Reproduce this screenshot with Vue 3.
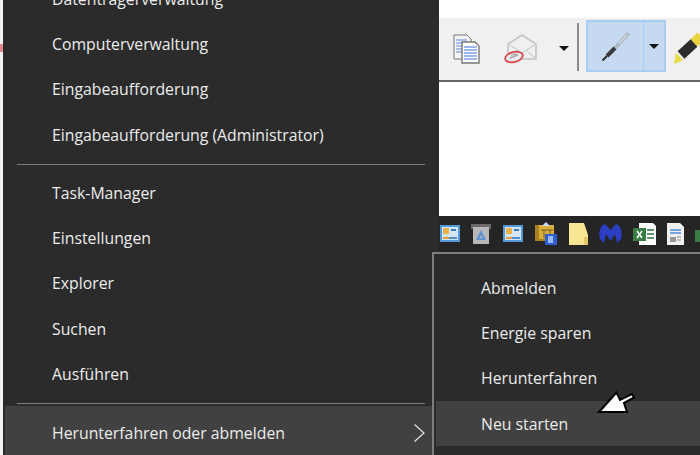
<script setup>
const groups = [
  ['Datenträgerverwaltung', 'Computerverwaltung', 'Eingabeaufforderung', 'Eingabeaufforderung (Administrator)'],
  ['Task-Manager', 'Einstellungen', 'Explorer', 'Suchen', 'Ausführen'],
]
const subItems = ['Abmelden', 'Energie sparen', 'Herunterfahren']
</script>

<template>
  <div class="screen">
    <div class="strip"><span class="mark"></span></div>
    <nav class="menu">
      <template v-for="(g, i) in groups" :key="i">
        <div class="row" v-for="t in g" :key="t">{{ t }}</div>
        <div class="sep" :class="'sep' + i"></div>
      </template>
      <div class="row hot">
        <span>Herunterfahren oder abmelden</span>
        <svg class="chev" width="13" height="20" viewBox="0 0 13 20"><path d="M1.500 1.500 11 10 1.500 18.500" fill="none" stroke="#e4e4e4" stroke-width="1.200"/></svg>
      </div>
    </nav>
    <div class="desk">
      <div class="white-top"></div>
      <div class="toolbar">
        <svg class="tool copy" width="28" height="30" viewBox="0 0 28 30">
          <path d="M1 1h13l4 4v20H1z" fill="#f4f4f4" stroke="#777"/>
          <path d="M3 6h11M3 9h11M3 12h11M3 15h11M3 18h11" stroke="#a9bde6" stroke-width="2"/>
          <path d="M9 8h13l4 4v17H9z" fill="#fff" stroke="#777" stroke-width="1.400"/>
          <path d="M11 13h13M11 16h13M11 19h13M11 22h13M11 25h13" stroke="#7d9fe6" stroke-width="1.600"/>
        </svg>
        <svg class="tool mail" width="34" height="31" viewBox="0 0 34 31">
          <path d="M4 10 18 1l14 9v15H4z" fill="#f0f0f0" stroke="#c4c4c4" stroke-width="1.600"/>
          <path d="M4 10l14 9 14-9M4 25l10-9M32 25l-10-9" fill="none" stroke="#cfcfcf" stroke-width="1.400"/>
          <ellipse cx="10" cy="23" rx="9" ry="5" transform="rotate(-14 10 23)" fill="#ececec" stroke="#d9484c" stroke-width="1.800"/>
          <path d="M6 24l8-3M7 21l6-1" stroke="#aaa" stroke-width="1.500"/>
        </svg>
        <i class="arrow a1"></i>
        <span class="vline"></span>
        <div class="pen-btn">
          <div class="pen-main">
            <svg class="soft" width="32" height="32" viewBox="0 0 32 32">
              <path d="M28.500 3.500 15 18" stroke="#aeb6c0" stroke-width="3.600"/>
              <path d="M27 5 19 13.500" stroke="#d5dbe2" stroke-width="1.200"/>
              <path d="M15 18 7 26" stroke="#3a3a3e" stroke-width="4"/>
              <path d="M7 26 2.500 30.500" stroke="#333" stroke-width="2.200"/>
            </svg>
          </div>
          <div class="pen-drop"><i class="arrow"></i></div>
        </div>
        <svg class="tool marker soft" width="28" height="32" viewBox="0 0 28 32">
          <path d="M21 11 28 4" stroke="#e8d23f" stroke-width="10"/>
          <path d="M8 23 21 11" stroke="#2c2c2c" stroke-width="10"/>
          <path d="M3 21l7 7-9 4z" fill="#e6dc4a"/>
        </svg>
      </div>
      <div class="paper"></div>
      <div class="tray">
        <svg class="ti" width="20" height="22" viewBox="0 0 20 22"><rect y="2" width="20" height="17" fill="#5598d8"/><rect x="2" y="4" width="16" height="13" fill="#d4e5f7"/><rect x="3" y="5" width="6" height="6" fill="#e9b04a"/><rect x="11" y="6" width="5" height="2" fill="#3c79ba"/><rect x="3" y="14" width="6" height="2" fill="#e39a35"/><rect x="9" y="14" width="8" height="2" fill="#4f8fd0"/></svg>
        <svg class="ti" width="20" height="22" viewBox="0 0 20 22"><path d="M0 1h20v5H0z" fill="#6a6a6a"/><path d="M2 4h16v17H2z" fill="#b8b8b8"/><path d="M10 7l5 10H5z" fill="#5f90d0"/><path d="M10 12l1.500 3h-3z" fill="#b8b8b8"/></svg>
        <svg class="ti" width="22" height="22" viewBox="0 0 20 22"><rect y="2" width="20" height="17" fill="#5598d8"/><rect x="2" y="4" width="16" height="13" fill="#d4e5f7"/><rect x="3" y="5" width="6" height="6" fill="#e9b04a"/><rect x="11" y="6" width="5" height="2" fill="#3c79ba"/><rect x="3" y="14" width="6" height="2" fill="#e39a35"/><rect x="9" y="14" width="8" height="2" fill="#4f8fd0"/></svg>
        <svg class="ti" width="23" height="24" viewBox="0 0 23 24"><path d="M0 3h19v16H0z" fill="#a87f22"/><path d="M4 3h15v14H4z" fill="#d9ae3d"/><path d="M6 8h12M9 8v8M15 8v8" stroke="#7a5a14"/><path d="M11 0l4 4h-8z" fill="#c9dcff"/><rect x="10" y="12" width="12" height="11" fill="#2f5fd0"/><rect x="13" y="14" width="5" height="7" fill="#9db9f2"/></svg>
        <svg class="ti" width="19" height="22" viewBox="0 0 19 22"><path d="M0 0h15l4 12v10H0z" fill="#f8e594"/><path d="M15 14h4v8h-4z" fill="#e5c766"/></svg>
        <svg class="ti" width="23" height="22" viewBox="0 0 23 22"><path d="M1 16C-1 8 2 2 6 1l5.500 6L17 1c4 1 7 7 5 15l-4 4-2-9-4.500 7L7 11l-2 9z" fill="#2a3fc4"/></svg>
        <svg class="ti" width="23" height="22" viewBox="0 0 23 22"><path d="M6 0h14l3 3v19H6z" fill="#fff"/><path d="M14 7h7M14 11h7M14 15h7" stroke="#2f6b3f" stroke-width="1.500"/><rect y="5" width="13" height="13" fill="#3a7d44"/><path d="M4 8l5 7M9 8l-5 7" stroke="#fff" stroke-width="1.500"/></svg>
        <svg class="ti" width="17" height="22" viewBox="0 0 17 22"><path d="M0 0h13l4 4v18H0z" fill="#f0f0f0"/><path d="M3 7h11M3 10h11" stroke="#4b8ad0" stroke-width="1.500"/><path d="M3 14h6v5H3z" fill="#999"/><path d="M10 14h4M10 17h4" stroke="#888"/></svg>
        <svg class="ti" width="6" height="22" viewBox="0 0 6 22"><rect y="7" width="6" height="12" fill="#3a7d44"/></svg>
      </div>
    </div>
    <div class="submenu">
      <div class="sub-row" v-for="t in subItems" :key="t">{{ t }}</div>
      <div class="sub-row hot">Neu starten</div>
    </div>
    <svg class="cursor" width="42" height="26" viewBox="0 0 42 26">
      <path d="M3 24 20.500 4.500 24 12l12-6 2 3.500-10 5.500 3 9z" fill="#fff" stroke="#000" stroke-width="2" stroke-linejoin="miter"/>
    </svg>
  </div>
</template>

<style>
html, body { margin: 0; background: #2b2b2b; }
</style>

<style scoped>
.screen {
  position: relative;
  width: 700px;
  height: 455px;
  overflow: hidden;
  display: flex;
  font-family: "Open Sans", "Noto Sans", sans-serif;
  font-size: 15.800px;
  color: #ececec;
}
.strip {
  width: 3px;
  flex: none;
  background: #f2f2f2;
  display: flex;
  flex-direction: column;
  padding-top: 44px;
  box-sizing: border-box;
}
.mark { display: block; height: 8px; background: #e08a8a; }
.menu {
  width: 436px;
  flex: none;
  background: #2b2b2b;
  box-sizing: border-box;
  margin-top: -25px;
  padding-top: 1px;
  padding-right: 7px;
}
.row {
  height: 45.300px;
  display: flex;
  align-items: center;
  padding-left: 49px;
  box-sizing: border-box;
}
.sep { height: 1px; background: #7e7e7e; margin-left: 14px; margin-right: 7px; }
.sep0 { margin-top: 7px; margin-bottom: 5px; }
.sep1 { margin-top: 6px; margin-bottom: 2px; }
.row.hot {
  height: 52px;
  margin-left: 2px;
  padding-left: 47px;
  padding-top: 3px;
  background: #414141;
  justify-content: space-between;
  padding-right: 6px;
}
.desk {
  flex: 1;
  display: flex;
  flex-direction: column;
  background: #fff;
}
.white-top { height: 18px; flex: none; background: #fff; }
.toolbar {
  height: 62px;
  flex: none;
  background: #f0f0f0;
  border-bottom: 2px solid #666;
  display: flex;
  align-items: center;
  overflow: hidden;
  padding-left: 14px;
}
.tool { flex: none; }
.mail { margin-left: 23px; margin-top: 1px; }
.arrow {
  display: block;
  width: 0;
  height: 0;
  border-left: 5px solid transparent;
  border-right: 5px solid transparent;
  border-top: 5px solid #111;
}
.a1 { margin-left: 21px; margin-top: -2px; }
.vline { width: 2px; height: 48px; background: #8c8c8c; margin-left: 8px; margin-top: -5px; flex: none; }
.pen-btn {
  display: flex;
  height: 52px;
  width: 80px;
  flex: none;
  margin-left: 7px;
  margin-top: -6px;
  box-sizing: border-box;
  border: 2px solid #a8cdf3;
  background: #c5d9f0;
}
.pen-main {
  width: 55px;
  border-right: 1px solid #a8cdf3;
  display: flex;
  align-items: center;
  justify-content: center;
}
.pen-drop {
  flex: 1;
  display: flex;
  align-items: center;
  justify-content: center;
}
.soft { filter: blur(0.4px); }
.marker { margin-left: 7px; margin-top: -3px; }
.paper { height: 134px; flex: none; background: #fff; }
.tray {
  height: 36px;
  flex: none;
  background: #252525;
  display: flex;
  align-items: center;
  gap: 11px;
  overflow: hidden;
  padding-left: 1px;
}
.ti { flex: none; }
.submenu {
  position: absolute;
  left: 432px;
  top: 252px;
  width: 268px;
  height: 203px;
  box-sizing: border-box;
  background: #2b2b2b;
  border-left: 2px solid #7e7e7e;
  border-top: 2px solid #7e7e7e;
  padding-top: 11px;
  padding-left: 2px;
}
.sub-row {
  height: 45.300px;
  display: flex;
  align-items: center;
  padding-left: 45px;
}
.sub-row.hot { background: #414141; }
.cursor { position: absolute; left: 596px; top: 388px; }
</style>
